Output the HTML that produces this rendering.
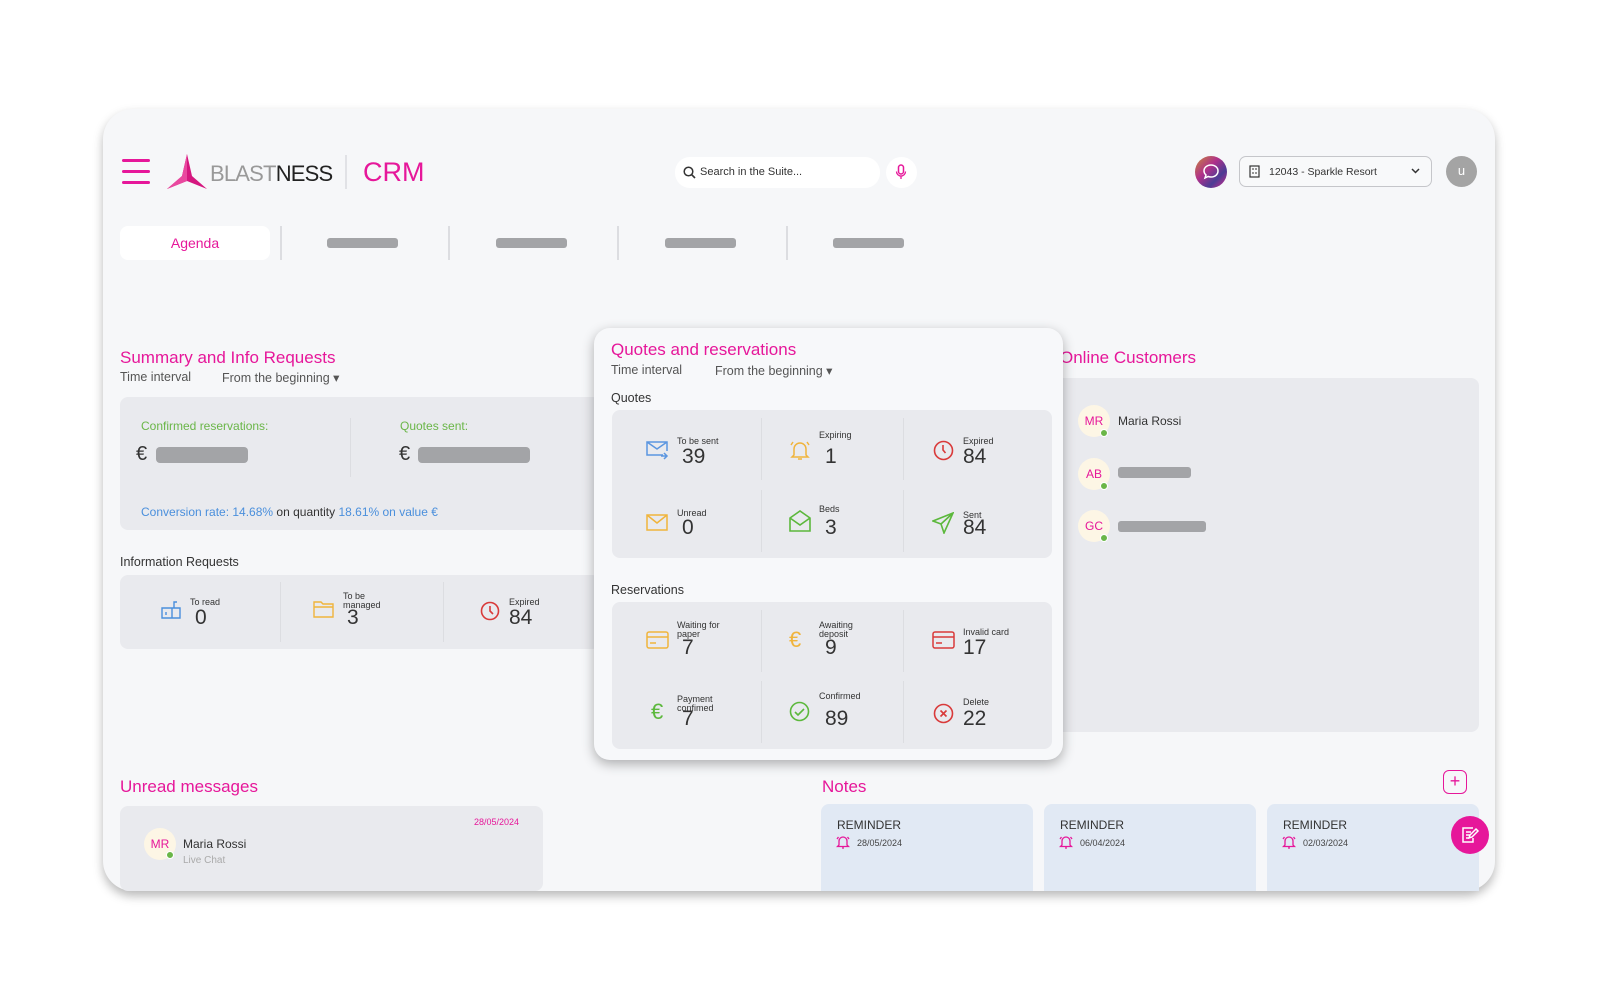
<!DOCTYPE html>
<html><head><meta charset="utf-8"><style>
*{margin:0;padding:0;box-sizing:border-box}
body{width:1600px;height:1000px;background:#fff;font-family:"Liberation Sans",sans-serif;color:#333;position:relative;overflow:hidden}
.a{position:absolute}
.card{left:103px;top:109px;width:1392px;height:782px;background:#f6f7f9;border-radius:30px;box-shadow:0 5px 10px rgba(0,0,0,.28)}
.pink{color:#e6179a}
.bar{background:#a3a4a7;border-radius:3px}
.box{background:#e9eaee;border-radius:8px}
.vd{width:1px;background:#dcdde1}
.t{font-size:17px;color:#e6179a}
.s{font-size:12.5px;color:#555}
.lab{font-size:9px;color:#333;line-height:9px}
.num{font-size:21px;color:#333}
.av{width:32px;height:32px;border-radius:50%;background:#fdf6e5;color:#e6179a;font-size:12px;text-align:center;line-height:32px}
.dot{width:8px;height:8px;border-radius:50%;background:#6ab648;border:1px solid #fff}
.note{background:#e1e9f4;border-radius:8px 8px 0 0;width:212px;height:87px;top:804px}
.note .h{position:absolute;left:16px;top:14px;font-size:12px;color:#333}
.note .d{position:absolute;left:36px;top:34px;font-size:9px;color:#444}
.note svg{position:absolute;left:15px;top:31px}
</style></head><body>
<div class="a card"></div>
<!-- header -->
<div class="a" style="left:122px;top:159px;width:28px;height:3px;background:#e6179a;border-radius:2px"></div>
<div class="a" style="left:122px;top:170px;width:28px;height:3px;background:#e6179a;border-radius:2px"></div>
<div class="a" style="left:122px;top:181px;width:28px;height:3px;background:#e6179a;border-radius:2px"></div>
<svg class="a" style="left:166px;top:154px" width="42" height="36" viewBox="0 0 42 36"><path d="M21 0 L26 22 L41 35 L21 27 L1 35 L16 22 Z" fill="#d5177f"/><path d="M21 0 L21 27 L1 35 L16 22Z" fill="#e9489f"/></svg>
<div class="a" style="left:210px;top:161px;font-size:22px;letter-spacing:-0.8px;color:#999">BLAST<span style="color:#222">NESS</span></div>
<div class="a" style="left:345px;top:155px;width:2px;height:34px;background:#e1e2e6"></div>
<div class="a pink" style="left:363px;top:157px;font-size:27px">CRM</div>
<div class="a" style="left:675px;top:157px;width:205px;height:31px;background:#fff;border-radius:15px"></div>
<svg class="a" style="left:683px;top:166px" width="13" height="13" viewBox="0 0 13 13"><circle cx="5.5" cy="5.5" r="4.3" fill="none" stroke="#333" stroke-width="1.5"/><path d="M8.6 8.6 L12 12" stroke="#333" stroke-width="1.6"/></svg>
<div class="a" style="left:700px;top:166px;font-size:11px;color:#333">Search in the Suite...</div>
<div class="a" style="left:886px;top:157px;width:31px;height:31px;background:#fff;border-radius:50%"></div>
<svg class="a" style="left:895px;top:164px" width="12" height="16" viewBox="0 0 12 16"><rect x="3.5" y="1" width="5" height="9" rx="2.5" fill="none" stroke="#e6179a" stroke-width="1.5"/><path d="M1.5 7.5a4.5 4.5 0 0 0 9 0M6 12v3" fill="none" stroke="#e6179a" stroke-width="1.3"/></svg>
<div class="a" style="left:1195px;top:156px;width:32px;height:32px;border-radius:50%;background:linear-gradient(135deg,#c8893a,#b0308a 40%,#4b3c95 70%,#d92a8a)"></div>
<svg class="a" style="left:1202px;top:163px" width="18" height="18" viewBox="0 0 18 18"><path d="M9 2c4 0 7 2.6 7 6s-3 6-7 6c-1 0-2-.2-2.8-.5L3 15l1-3C2.7 10.8 2 9.5 2 8c0-3.4 3-6 7-6z" fill="none" stroke="#fff" stroke-width="1.5"/></svg>
<div class="a" style="left:1239px;top:156px;width:193px;height:31px;border:1px solid #c5c6ca;border-radius:7px;background:#f8f9fa"></div>
<svg class="a" style="left:1249px;top:165px" width="11" height="13" viewBox="0 0 11 13"><rect x="1" y="1" width="9" height="11" fill="none" stroke="#333" stroke-width="1.2"/><path d="M4 3v2M7 3v2M4 7v2M7 7v2" stroke="#333"/></svg>
<div class="a" style="left:1269px;top:166px;font-size:10.5px;color:#333">12043 - Sparkle Resort</div>
<svg class="a" style="left:1411px;top:168px" width="9" height="6" viewBox="0 0 9 6"><path d="M1 1l3.5 3.5L8 1" fill="none" stroke="#333" stroke-width="1.5"/></svg>
<div class="a" style="left:1446px;top:156px;width:31px;height:31px;border-radius:50%;background:#a4a4a4;color:#fff;font-size:13px;text-align:center;line-height:29px">u</div>
<!-- tabs -->
<div class="a" style="left:120px;top:226px;width:150px;height:34px;background:#fff;border-radius:8px;text-align:center;line-height:34px;font-size:14px;color:#e6179a">Agenda</div>
<div class="a vd" style="left:280px;top:226px;height:34px;width:2px"></div>
<div class="a vd" style="left:448px;top:226px;height:34px;width:2px"></div>
<div class="a vd" style="left:617px;top:226px;height:34px;width:2px"></div>
<div class="a vd" style="left:786px;top:226px;height:34px;width:2px"></div>
<div class="a bar" style="left:327px;top:238px;width:71px;height:10px"></div>
<div class="a bar" style="left:496px;top:238px;width:71px;height:10px"></div>
<div class="a bar" style="left:665px;top:238px;width:71px;height:10px"></div>
<div class="a bar" style="left:833px;top:238px;width:71px;height:10px"></div>
<!-- summary -->
<div class="a t" style="left:120px;top:348px">Summary and Info Requests</div>
<div class="a s" style="left:120px;top:370px">Time interval</div>
<div class="a s" style="left:222px;top:370px">From the beginning &#9662;</div>
<div class="a box" style="left:120px;top:397px;width:480px;height:133px"></div>
<div class="a" style="left:141px;top:419px;font-size:12px;color:#6ab648">Confirmed reservations:</div>
<div class="a" style="left:400px;top:419px;font-size:12px;color:#6ab648">Quotes sent:</div>
<div class="a vd" style="left:350px;top:418px;height:59px"></div>
<div class="a" style="left:136px;top:443px;font-size:20px;color:#333">€</div>
<div class="a bar" style="left:156px;top:447px;width:92px;height:16px;border-radius:4px"></div>
<div class="a" style="left:399px;top:443px;font-size:20px;color:#333">€</div>
<div class="a bar" style="left:418px;top:447px;width:112px;height:16px;border-radius:4px"></div>
<div class="a" style="left:141px;top:505px;font-size:12px;color:#4a8fdc">Conversion rate: 14.68% <span style="color:#333">on quantity</span> 18.61% on value €</div>
<div class="a" style="left:120px;top:555px;font-size:12.5px;color:#333">Information Requests</div>
<div class="a box" style="left:120px;top:575px;width:480px;height:74px"></div>
<div class="a vd" style="left:280px;top:582px;height:60px"></div>
<div class="a vd" style="left:443px;top:582px;height:60px"></div>
<svg class="a" style="left:160px;top:600px" width="22" height="20" viewBox="0 0 22 20"><path d="M2 8h10v10H2zM12 8h8v10h-8M6 12v3M14 8V2h3" fill="none" stroke="#4a8fdc" stroke-width="1.4"/></svg>
<div class="a lab" style="left:190px;top:598px">To read</div><div class="a num" style="left:195px;top:606px">0</div>
<svg class="a" style="left:313px;top:600px" width="22" height="18" viewBox="0 0 22 18"><path d="M1 2h7l2 2h10v13H1z M1 7h19" fill="none" stroke="#f0b43c" stroke-width="1.4"/></svg>
<div class="a lab" style="left:343px;top:592px">To be<br>managed</div><div class="a num" style="left:347px;top:606px">3</div>
<svg class="a" style="left:480px;top:601px" width="20" height="20" viewBox="0 0 20 20"><circle cx="10" cy="10" r="8.5" fill="none" stroke="#d93a3a" stroke-width="1.6"/><path d="M10 5v5l3 3" fill="none" stroke="#d93a3a" stroke-width="1.6"/></svg>
<div class="a lab" style="left:509px;top:598px">Expired</div><div class="a num" style="left:509px;top:606px">84</div>
<!-- online -->
<div class="a t" style="left:1060px;top:348px">Online Customers</div>
<div class="a box" style="left:1040px;top:378px;width:439px;height:354px"></div>
<div class="a av" style="left:1078px;top:405px">MR</div><div class="a dot" style="left:1100px;top:429px"></div>
<div class="a" style="left:1118px;top:414px;font-size:12px;color:#333">Maria Rossi</div>
<div class="a av" style="left:1078px;top:458px">AB</div><div class="a dot" style="left:1100px;top:482px"></div>
<div class="a bar" style="left:1118px;top:467px;width:73px;height:11px"></div>
<div class="a av" style="left:1078px;top:510px">GC</div><div class="a dot" style="left:1100px;top:534px"></div>
<div class="a bar" style="left:1118px;top:521px;width:88px;height:11px"></div>
<!-- popup -->
<div class="a" style="left:594px;top:328px;width:469px;height:432px;background:#f7f8fa;border-radius:16px;box-shadow:0 4px 12px rgba(0,0,0,.3)"></div>
<div class="a t" style="left:611px;top:340px">Quotes and reservations</div>
<div class="a s" style="left:611px;top:363px">Time interval</div>
<div class="a s" style="left:715px;top:363px">From the beginning &#9662;</div>
<div class="a s" style="left:611px;top:391px;color:#333">Quotes</div>
<div class="a box" style="left:612px;top:410px;width:440px;height:148px"></div>
<div class="a vd" style="left:761px;top:418px;height:62px"></div><div class="a vd" style="left:761px;top:490px;height:62px"></div>
<div class="a vd" style="left:903px;top:418px;height:62px"></div><div class="a vd" style="left:903px;top:490px;height:62px"></div>
<svg class="a" style="left:646px;top:440px" width="24" height="20" viewBox="0 0 24 20"><path d="M17 15H1V2h20v9M1 2l10 7 10-7M18 13l3 3-3 3M15 16h6" fill="none" stroke="#5b96e0" stroke-width="1.5"/></svg>
<div class="a lab" style="left:677px;top:437px">To be sent</div><div class="a num" style="left:682px;top:445px">39</div>
<svg class="a" style="left:789px;top:439px" width="22" height="22" viewBox="0 0 22 22"><path d="M5 16V10a6 6 0 0 1 12 0v6l2 2H3z M9 20h4M2 6l2-3M20 6l-2-3" fill="none" stroke="#f0b43c" stroke-width="1.5"/></svg>
<div class="a lab" style="left:819px;top:431px">Expiring</div><div class="a num" style="left:825px;top:445px">1</div>
<svg class="a" style="left:933px;top:440px" width="21" height="21" viewBox="0 0 21 21"><circle cx="10.5" cy="10.5" r="9" fill="none" stroke="#d93a3a" stroke-width="1.6"/><path d="M10 5v5l2.5 3" fill="none" stroke="#d93a3a" stroke-width="1.6"/></svg>
<div class="a lab" style="left:963px;top:437px">Expired</div><div class="a num" style="left:963px;top:445px">84</div>
<svg class="a" style="left:646px;top:514px" width="22" height="17" viewBox="0 0 22 17"><rect x="1" y="1" width="20" height="15" fill="none" stroke="#f0b43c" stroke-width="1.5"/><path d="M1 1l10 8 10-8" fill="none" stroke="#f0b43c" stroke-width="1.5"/></svg>
<div class="a lab" style="left:677px;top:509px">Unread</div><div class="a num" style="left:682px;top:516px">0</div>
<svg class="a" style="left:789px;top:510px" width="22" height="22" viewBox="0 0 22 22"><path d="M1 8l10-7 10 7v13H1z M1 8l10 7 10-7" fill="none" stroke="#5cb83c" stroke-width="1.6"/></svg>
<div class="a lab" style="left:819px;top:505px">Beds</div><div class="a num" style="left:825px;top:516px">3</div>
<svg class="a" style="left:932px;top:512px" width="22" height="22" viewBox="0 0 22 22"><path d="M21 1L1 9l8 3 3 9z M9 12L21 1" fill="none" stroke="#5cb83c" stroke-width="1.6"/></svg>
<div class="a lab" style="left:963px;top:511px">Sent</div><div class="a num" style="left:963px;top:516px">84</div>
<div class="a s" style="left:611px;top:583px;color:#333">Reservations</div>
<div class="a box" style="left:612px;top:602px;width:440px;height:147px"></div>
<div class="a vd" style="left:761px;top:610px;height:62px"></div><div class="a vd" style="left:761px;top:681px;height:62px"></div>
<div class="a vd" style="left:903px;top:610px;height:62px"></div><div class="a vd" style="left:903px;top:681px;height:62px"></div>
<svg class="a" style="left:646px;top:631px" width="23" height="18" viewBox="0 0 23 18"><rect x="1" y="1" width="21" height="16" rx="2" fill="none" stroke="#f0b43c" stroke-width="1.5"/><path d="M1 6h21M4 12h6" stroke="#f0b43c" stroke-width="1.5"/></svg>
<div class="a lab" style="left:677px;top:621px">Waiting for<br>paper</div><div class="a num" style="left:682px;top:636px">7</div>
<div class="a" style="left:789px;top:627px;font-size:22px;color:#f0b43c">€</div>
<div class="a lab" style="left:819px;top:621px">Awaiting<br>deposit</div><div class="a num" style="left:825px;top:636px">9</div>
<svg class="a" style="left:932px;top:631px" width="23" height="18" viewBox="0 0 23 18"><rect x="1" y="1" width="21" height="16" rx="2" fill="none" stroke="#d93a3a" stroke-width="1.5"/><path d="M1 6h21M4 12h6" stroke="#d93a3a" stroke-width="1.5"/></svg>
<div class="a lab" style="left:963px;top:628px">Invalid card</div><div class="a num" style="left:963px;top:636px">17</div>
<div class="a" style="left:651px;top:699px;font-size:22px;color:#5cb83c">€</div>
<div class="a lab" style="left:677px;top:695px">Payment<br>confimed</div><div class="a num" style="left:682px;top:707px">7</div>
<svg class="a" style="left:789px;top:701px" width="21" height="21" viewBox="0 0 21 21"><circle cx="10.5" cy="10.5" r="9" fill="none" stroke="#5cb83c" stroke-width="1.6"/><path d="M6 11l3 3 6-6" fill="none" stroke="#5cb83c" stroke-width="1.6"/></svg>
<div class="a lab" style="left:819px;top:692px">Confirmed</div><div class="a num" style="left:825px;top:707px">89</div>
<svg class="a" style="left:933px;top:703px" width="21" height="21" viewBox="0 0 21 21"><circle cx="10.5" cy="10.5" r="9" fill="none" stroke="#d93a3a" stroke-width="1.6"/><path d="M7.5 7.5l6 6M13.5 7.5l-6 6" stroke="#d93a3a" stroke-width="1.6"/></svg>
<div class="a lab" style="left:963px;top:698px">Delete</div><div class="a num" style="left:963px;top:707px">22</div>
<!-- unread -->
<div class="a t" style="left:120px;top:777px">Unread messages</div>
<div class="a box" style="left:120px;top:806px;width:423px;height:85px"></div>
<div class="a" style="left:474px;top:817px;font-size:9px;color:#e6179a">28/05/2024</div>
<div class="a av" style="left:144px;top:828px">MR</div><div class="a dot" style="left:166px;top:851px"></div>
<div class="a" style="left:183px;top:837px;font-size:12px;color:#333">Maria Rossi</div>
<div class="a" style="left:183px;top:855px;font-size:10px;color:#aaa">Live Chat</div>
<!-- notes -->
<div class="a t" style="left:822px;top:777px">Notes</div>
<div class="a" style="left:1443px;top:770px;width:24px;height:24px;border:1.5px solid #e6179a;border-radius:6px;color:#e6179a;text-align:center;line-height:20px;font-size:18px">+</div>
<div class="a note" style="left:821px"><div class="h">REMINDER</div><svg width="14" height="14" viewBox="0 0 14 14"><path d="M3 10V6a4 4 0 0 1 8 0v4l1.5 1.5h-11z M6 13h2M1 4l1.5-2M13 4l-1.5-2" fill="none" stroke="#e6179a" stroke-width="1.3"/></svg><div class="d">28/05/2024</div></div>
<div class="a note" style="left:1044px"><div class="h">REMINDER</div><svg width="14" height="14" viewBox="0 0 14 14"><path d="M3 10V6a4 4 0 0 1 8 0v4l1.5 1.5h-11z M6 13h2M1 4l1.5-2M13 4l-1.5-2" fill="none" stroke="#e6179a" stroke-width="1.3"/></svg><div class="d">06/04/2024</div></div>
<div class="a note" style="left:1267px"><div class="h">REMINDER</div><svg width="14" height="14" viewBox="0 0 14 14"><path d="M3 10V6a4 4 0 0 1 8 0v4l1.5 1.5h-11z M6 13h2M1 4l1.5-2M13 4l-1.5-2" fill="none" stroke="#e6179a" stroke-width="1.3"/></svg><div class="d">02/03/2024</div></div>
<div class="a" style="left:1451px;top:816px;width:38px;height:38px;border-radius:50%;background:#e6179a"></div>
<svg class="a" style="left:1460px;top:825px" width="20" height="20" viewBox="0 0 20 20"><path d="M13 3H3v14h10v-4M6 7h5M6 10h4M6 13h3M16 4l2 2-6 6-3 1 1-3z" fill="none" stroke="#fff" stroke-width="1.5"/></svg>
</body></html>
